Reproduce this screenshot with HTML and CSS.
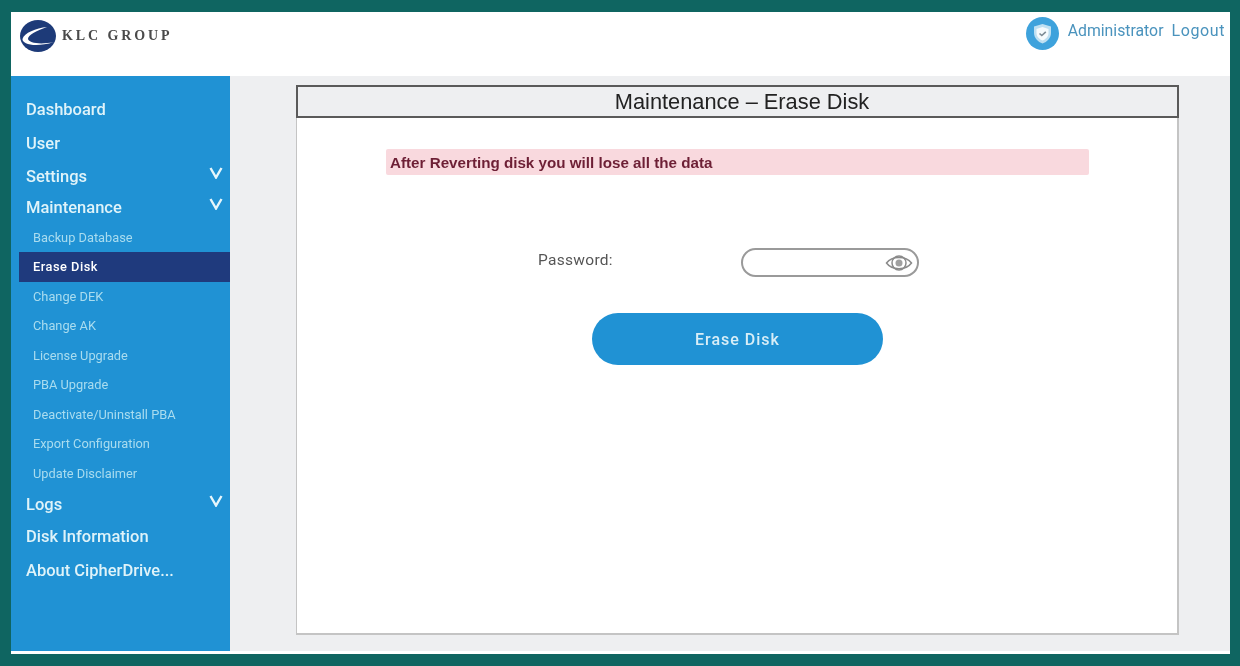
FILE: index.html
```html
<!DOCTYPE html>
<html lang="en">
<head>
  <meta charset="UTF-8" />
  <title>Maintenance - Erase Disk</title>
  <link rel="stylesheet" href="styles.css">
</head>
<body>
  <div class="frame">
    <header class="topbar">
      <div class="logo">
        <svg class="logo-mark" width="36" height="32" viewBox="0 0 36 32">
          <ellipse cx="18" cy="16" rx="18" ry="16" fill="#1d3a78"/>
          <path d="M27 7 C16 8 4 13 2.500 19 C2 24 15 28 34 22 C20 25 9 23 8 19 C8 15 16 11 27 7 Z" fill="#fff"/>
        </svg>
        <span class="logo-text">KLC GROUP</span>
      </div>
      <div class="user">
        <svg class="user-icon" width="33" height="33" viewBox="0 0 33 33">
          <circle cx="16.5" cy="16.5" r="16.5" fill="#3ea2dc"/>
          <path d="M16.5 7 L25 9.500 V16 C25 21 21 25 16.500 26.500 C12 25 8 21 8 16 V9.500 Z" fill="#bfe0f2"/>
          <path d="M16.5 10 L22.500 12 V16 C22.500 19.500 19.500 22.500 16.500 23.500 C13.500 22.500 10.500 19.500 10.500 16 V12 Z" fill="#f6fbfd"/>
          <path d="M13.5 16.5 L15.800 18.500 L19.800 14.800" fill="none" stroke="#7d8c96" stroke-width="1.600"/>
        </svg>
        <a class="user-link">Administrator</a>
        <a class="user-link logout">Logout</a>
      </div>
    </header>

    <div class="body">
      <nav class="sidebar">
        <a class="nav-item item-dashboard">Dashboard</a>
        <a class="nav-item">User</a>
        <a class="nav-item">Settings
          <svg class="chev" width="14" height="12" viewBox="0 0 14 12"><path d="M1.5 1 L7 10.500 L12.500 1" fill="none" stroke="#e6f6fb" stroke-width="2.400"/></svg>
        </a>
        <a class="nav-item item-open">Maintenance
          <svg class="chev" width="14" height="12" viewBox="0 0 14 12"><path d="M1.5 1 L7 10.500 L12.500 1" fill="none" stroke="#e6f6fb" stroke-width="2.400"/></svg>
        </a>
        <a class="sub-item">Backup Database</a>
        <a class="sub-item active">Erase Disk</a>
        <a class="sub-item">Change DEK</a>
        <a class="sub-item">Change AK</a>
        <a class="sub-item">License Upgrade</a>
        <a class="sub-item">PBA Upgrade</a>
        <a class="sub-item">Deactivate/Uninstall PBA</a>
        <a class="sub-item">Export Configuration</a>
        <a class="sub-item">Update Disclaimer</a>
        <a class="nav-item item-logs">Logs
          <svg class="chev" width="14" height="12" viewBox="0 0 14 12"><path d="M1.5 1 L7 10.500 L12.500 1" fill="none" stroke="#e6f6fb" stroke-width="2.400"/></svg>
        </a>
        <a class="nav-item item-disk">Disk Information</a>
        <a class="nav-item item-about">About CipherDrive...</a>
      </nav>

      <main class="content">
        <section class="panel">
          <h2 class="panel-title">Maintenance – Erase Disk</h2>
          <div class="panel-body">
            <div class="alert">After Reverting disk you will lose all the data</div>
            <div class="form-row">
              <label class="form-label">Password:</label>
              <div class="password-box">
                <svg class="eye" width="28" height="20" viewBox="0 0 28 20">
                  <path d="M1.500 10 C7 2.500 21 2.500 26.500 10 C21 17.500 7 17.500 1.500 10 Z" fill="none" stroke="#8a8a8a" stroke-width="1.500"/>
                  <circle cx="14" cy="10" r="7" fill="none" stroke="#8a8a8a" stroke-width="1.500"/>
                  <circle cx="14" cy="10" r="3.500" fill="#a0a0a0"/>
                </svg>
              </div>
            </div>
            <button class="erase-btn">Erase Disk</button>
          </div>
        </section>
      </main>
    </div>
  </div>
</body>
</html>
```

FILE: styles.css
```css
html, body {
  margin: 0;
  padding: 0;
  height: 100%;
  overflow: hidden;
  background: #0f6561;
  font-family: Roboto, Arial, sans-serif;
}
.frame {
  width: 1219px;
  height: 642px;
  margin: 12px 0 0 11px;
  background: #fff;
  display: flex;
  flex-direction: column;
  filter: blur(0.4px);
}
.topbar {
  height: 64px;
  flex: none;
  display: flex;
  justify-content: space-between;
  align-items: flex-start;
  background: #fff;
}
.logo {
  display: flex;
  align-items: center;
  margin: 8px 0 0 9px;
}
.logo-text {
  margin-left: 6px;
  font-family: "Liberation Serif", serif;
  font-size: 14px;
  font-weight: bold;
  letter-spacing: 2.9px;
  color: #4a4a4a;
}
.user {
  display: flex;
  align-items: flex-start;
  margin: 5px 5px 0 0;
}
.user-icon {
  margin-right: 9px;
}
.user-link {
  margin-right: 8px;
  line-height: 27px;
  font-size: 15.8px;
  color: #4a93bd;
}
.logout {
  margin-right: 0;
  font-size: 16px;
  letter-spacing: 0.6px;
}
.body {
  flex: 1;
  display: flex;
  margin-bottom: 3px;
  min-height: 0;
}
.sidebar {
  width: 219px;
  flex: none;
  background: #2092d4;
  padding-top: 16px;
  box-sizing: border-box;
}
.nav-item {
  height: 33.5px;
  display: flex;
  align-items: center;
  justify-content: space-between;
  padding: 0 7px 0 15px;
  font-size: 16.5px;
  font-weight: 500;
  color: #dff3f9;
}
.item-dashboard {
  height: 34.5px;
}
.item-open {
  height: 28px;
  margin-bottom: 1px;
}
.item-logs {
  height: 33px;
}
.item-disk {
  height: 30px;
}
.item-about {
  height: 38px;
}
.chev {
  margin-top: -7px;
}
.sub-item {
  display: flex;
  align-items: center;
  height: 29.5px;
  margin-left: 8px;
  padding-left: 14px;
  font-size: 12.8px;
  color: #a9dcef;
}
.sub-item.active {
  background: #1f3a7d;
  color: #fff;
  font-weight: 500;
  letter-spacing: 0.5px;
}
.content {
  flex: 1;
  background: #eeeff1;
  padding: 9px 51px 16px 66px;
  min-width: 0;
}
.panel {
  height: 100%;
  box-sizing: border-box;
  background: #fff;
  border: 1px solid #c4c4c4;
  border-width: 0 2px 2px 1px;
  display: flex;
  flex-direction: column;
}
.panel-title {
  height: 33px;
  box-sizing: border-box;
  background: #eeeff1;
  border: 2px solid #5a5a5a;
  margin: 0 -2px 0 -1px;
  padding-left: 9px;
  font-family: "Liberation Sans", Arial, sans-serif;
  font-size: 21.8px;
  font-weight: normal;
  line-height: 30px;
  text-align: center;
  color: #222;
}
.panel-body {
  flex: 1;
  display: flex;
  flex-direction: column;
  align-items: center;
  padding-top: 31px;
}
.alert {
  width: 703px;
  height: 26px;
  box-sizing: border-box;
  padding-left: 4px;
  margin-left: 1px;
  background: #f9d9de;
  border-radius: 2px;
  font-family: "Liberation Sans", Arial, sans-serif;
  font-size: 15.2px;
  font-weight: bold;
  line-height: 27px;
  color: #6d1f35;
}
.form-row {
  display: flex;
  align-items: flex-start;
  width: 382px;
  margin-top: 73px;
  margin-right: 16px;
}
.form-label {
  width: 203px;
  font-size: 15.5px;
  letter-spacing: 0.3px;
  line-height: 24px;
  color: #555;
}
.password-box {
  width: 178px;
  height: 29px;
  box-sizing: border-box;
  border: 2px solid #9a9a9a;
  border-radius: 15px;
  display: flex;
  align-items: center;
  justify-content: flex-end;
  padding-right: 4px;
}
.erase-btn {
  width: 291px;
  height: 52px;
  margin-top: 36px;
  margin-left: 1px;
  border: none;
  border-radius: 26px;
  background: #2092d4;
  font-family: Roboto, Arial, sans-serif;
  font-size: 16px;
  font-weight: 500;
  letter-spacing: 1px;
  color: #d8eef7;
}
```
